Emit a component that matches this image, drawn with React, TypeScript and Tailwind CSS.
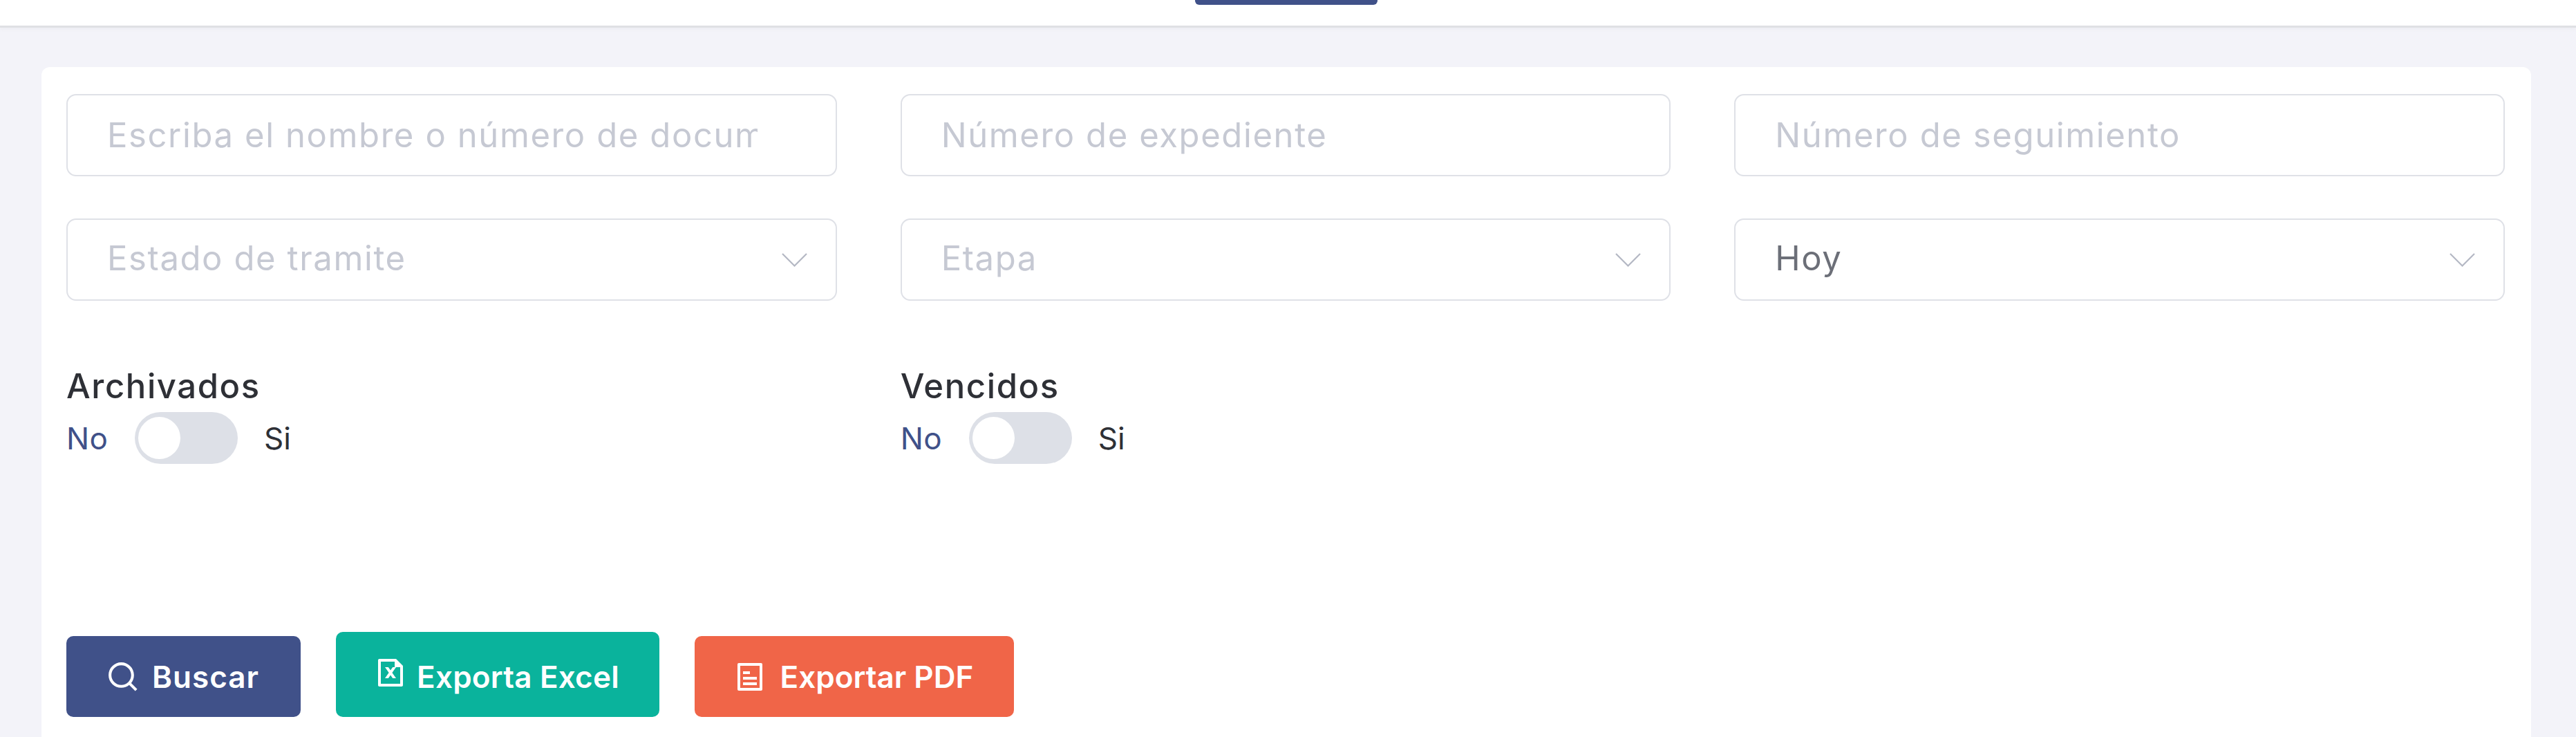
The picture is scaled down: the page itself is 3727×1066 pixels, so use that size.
import { RiFileExcelLine, RiSearchLine } from 'react-icons/ri';

const font = "font-['Inter','Liberation_Sans',sans-serif]";

function Chevron() {
    return (
        <svg viewBox="0 0 37 20" className="h-[20px] w-[37px] shrink-0 text-[#b4b8c4]" fill="none" stroke="currentColor" strokeWidth="2.2">
            <path d="M1 1 L18.5 18.5 L36 1" />
        </svg>
    );
}

function PdfIcon() {
    return (
        <svg viewBox="0 0 24 24" className="size-[48px]" fill="currentColor">
            <path d="M20 22H4a1 1 0 0 1-1-1V3a1 1 0 0 1 1-1h16a1 1 0 0 1 1 1v18a1 1 0 0 1-1 1zm-1-2V4H5v16h14zM7 8h5v2H7zm0 4h10v2H7zm0 4h10v2H7z" />
        </svg>
    );
}

function TextField({ placeholder }: { placeholder: string }) {
    return (
        <input
            readOnly
            placeholder={placeholder}
            className="h-[119px] w-full rounded-[14px] border-2 border-[#dfe1e7] bg-white pl-[57px] pr-[113px] text-[49px] tracking-[1.6px] text-[#6c6f78] outline-none placeholder:text-[#c6c9d3]"
        />
    );
}

function SelectField({ label, muted = true }: { label: string; muted?: boolean }) {
    return (
        <div className="flex h-[119px] items-center justify-between rounded-[14px] border-2 border-[#dfe1e7] bg-white pl-[57px] pr-[41px]">
            <span className={muted ? 'pb-[3px] text-[49px] tracking-[1.6px] text-[#c6c9d3]' : 'pb-[3px] text-[49px] tracking-[1.6px] text-[#6c6f78]'}>{label}</span>
            <Chevron />
        </div>
    );
}

function Toggle({ label }: { label: string }) {
    return (
        <div>
            <div className="text-[49px] font-medium leading-[56px] tracking-[1.6px] text-[#2e3036]">{label}</div>
            <div className="mt-[9px] flex items-center">
                <span className="w-[99px] text-[44px] tracking-[0.4px] text-[#405189]">No</span>
                <div className="flex h-[75px] w-[149px] items-center rounded-full bg-[#dde0e7] pl-[5px]">
                    <div className="h-[61px] w-[61px] rounded-full bg-white" />
                </div>
                <span className="ml-[38px] text-[44px] text-[#2e3036]">Si</span>
            </div>
        </div>
    );
}

export default function App() {
    return (
        <div className={`h-[1066px] w-full overflow-hidden bg-[#f3f3f9] ${font}`}>
            <header className="flex h-[37px] justify-center bg-white shadow-[0_3px_0_#dfe0e4,0_6px_4px_#eeeef3]">
                <div className="ml-[-6px] h-[7px] w-[264px] rounded-b-[6px] bg-[#405189]" />
            </header>

            <main className="pl-[60px] pr-[65px] pt-[60px]">
                <div className="h-[1000px] rounded-t-[12px] bg-white pl-[36px] pr-[38px] pt-[39px]">
                    <div className="grid grid-cols-3 gap-x-[92px] gap-y-[61px]">
                        <TextField placeholder="Escriba el nombre o número de documento" />
                        <TextField placeholder="Número de expediente" />
                        <TextField placeholder="Número de seguimiento" />
                        <SelectField label="Estado de tramite" />
                        <SelectField label="Etapa" />
                        <SelectField label="Hoy" muted={false} />
                    </div>

                    <div className="mt-[96px] grid grid-cols-3 gap-x-[92px]">
                        <Toggle label="Archivados" />
                        <Toggle label="Vencidos" />
                    </div>

                    <div className="mt-[243px] flex items-end gap-[51px] text-[44px] font-semibold text-white">
                        <button className="flex h-[117px] w-[339px] items-center justify-center gap-[18px] rounded-[10px] bg-[#405189] pr-[3px] tracking-[1px]">
                            <RiSearchLine className="size-[49px]" />
                            Buscar
                        </button>
                        <button className="flex h-[123px] w-[468px] items-center justify-center gap-[14px] rounded-[10px] bg-[#0ab39c] pr-[3px] pt-[6px] tracking-[0.2px]">
                            <RiFileExcelLine className="mb-[12px] size-[48px]" />
                            Exporta Excel
                        </button>
                        <button className="flex h-[117px] w-[462px] items-center justify-center gap-[20px] rounded-[10px] bg-[#f06548] pr-[3px] tracking-[0px]">
                            <PdfIcon />
                            Exportar PDF
                        </button>
                    </div>
                </div>
            </main>
        </div>
    );
}
